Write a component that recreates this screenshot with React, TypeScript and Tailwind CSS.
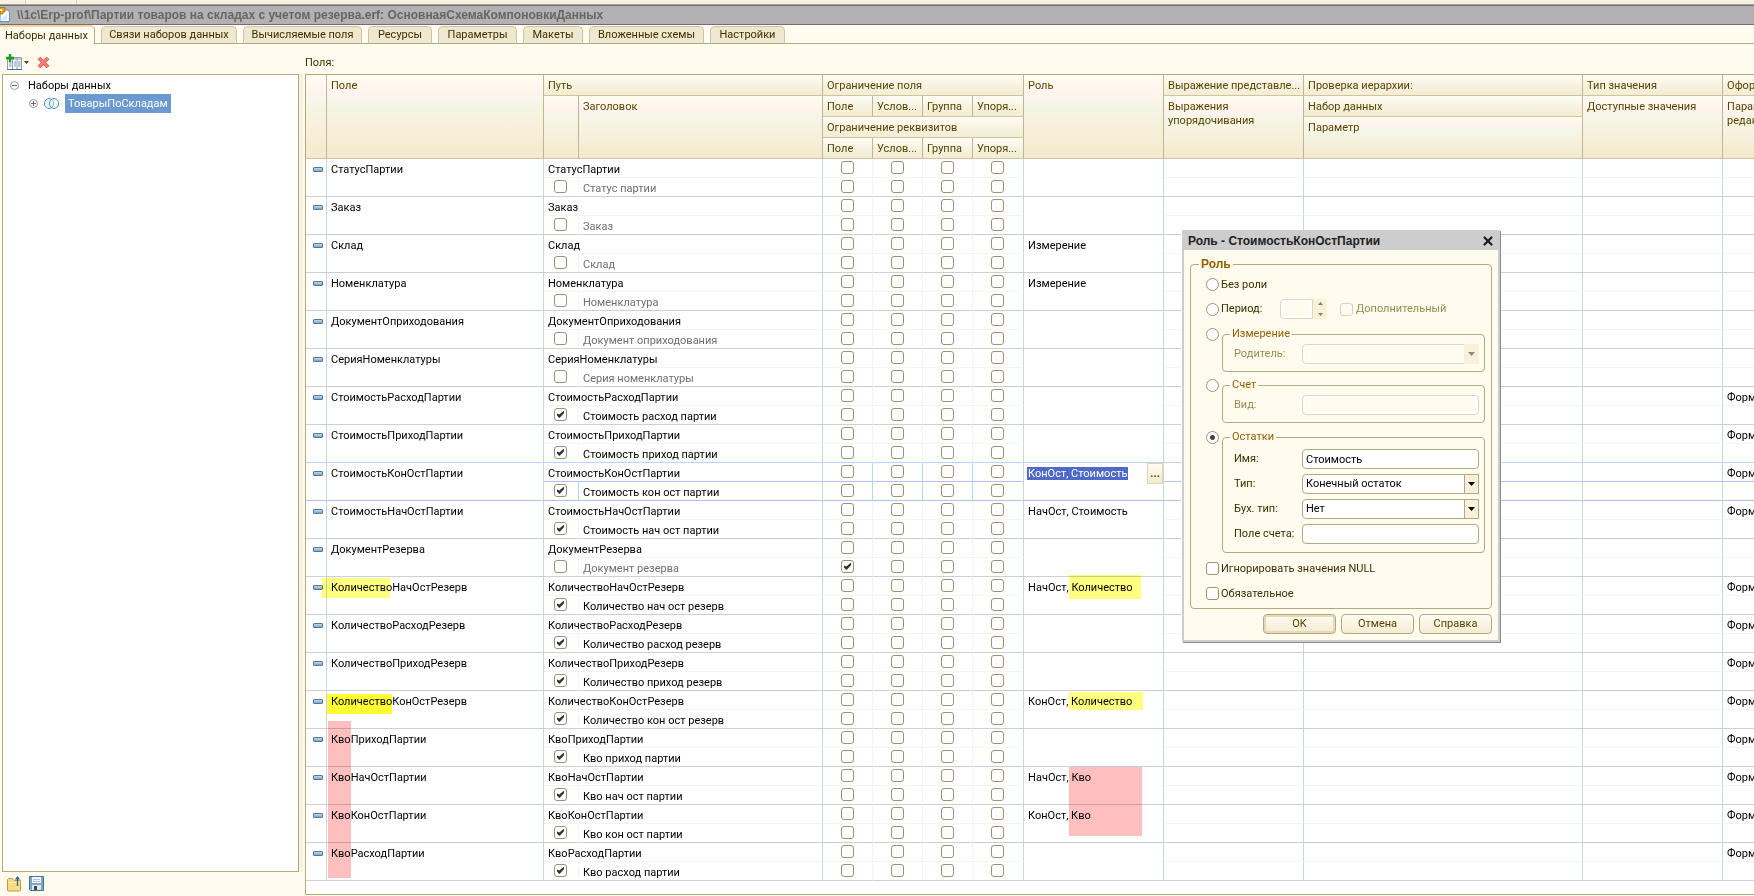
import { useState } from 'react';
import { X } from 'lucide-react';

const tabs = [
    { title: 'Связи наборов данных', width: 'w-[136px]' },
    { title: 'Вычисляемые поля', width: 'w-[119px]' },
    { title: 'Ресурсы', width: 'w-16' },
    { title: 'Параметры', width: 'w-[79px]' },
    { title: 'Макеты', width: 'w-[60px]' },
    { title: 'Вложенные схемы', width: 'w-[115px]' },
    { title: 'Настройки', width: 'w-[75px]' },
];

const fields = [
    { name: 'СтатусПартии', title: 'Статус партии' },
    { name: 'Заказ', title: 'Заказ' },
    { name: 'Склад', title: 'Склад', role: 'Измерение' },
    { name: 'Номенклатура', title: 'Номенклатура', role: 'Измерение' },
    { name: 'ДокументОприходования', title: 'Документ оприходования' },
    { name: 'СерияНоменклатуры', title: 'Серия номенклатуры' },
    { name: 'СтоимостьРасходПартии', title: 'Стоимость расход партии', custom: true, format: true },
    { name: 'СтоимостьПриходПартии', title: 'Стоимость приход партии', custom: true, format: true },
    { name: 'СтоимостьКонОстПартии', title: 'Стоимость кон ост партии', custom: true, format: true, role: 'КонОст, Стоимость', active: true },
    { name: 'СтоимостьНачОстПартии', title: 'Стоимость нач ост партии', custom: true, format: true, role: 'НачОст, Стоимость' },
    { name: 'ДокументРезерва', title: 'Документ резерва', restricted: true },
    { name: 'КоличествоНачОстРезерв', title: 'Количество нач ост резерв', custom: true, format: true, role: 'НачОст, Количество' },
    { name: 'КоличествоРасходРезерв', title: 'Количество расход резерв', custom: true, format: true },
    { name: 'КоличествоПриходРезерв', title: 'Количество приход резерв', custom: true, format: true },
    { name: 'КоличествоКонОстРезерв', title: 'Количество кон ост резерв', custom: true, format: true, role: 'КонОст, Количество' },
    { name: 'КвоПриходПартии', title: 'Кво приход партии', custom: true, format: true },
    { name: 'КвоНачОстПартии', title: 'Кво нач ост партии', custom: true, format: true, role: 'НачОст, Кво' },
    { name: 'КвоКонОстПартии', title: 'Кво кон ост партии', custom: true, format: true, role: 'КонОст, Кво' },
    { name: 'КвоРасходПартии', title: 'Кво расход партии', custom: true, format: true },
];

export default function App() {
    const [dialogOpen, setDialogOpen] = useState(true);

    return (
        <div className="relative min-h-screen flex flex-col bg-[#fffbef] text-[#3f2f00] text-[11px] leading-[14px] font-[Roboto,'Liberation_Sans',sans-serif] overflow-hidden">
            {/* Window title */}
            <div className="h-1 bg-[#f7f1df] flex">
                <div className="w-[26px] border-r border-[#ddd5bb]" />
                <div className="w-[51px] border-r border-[#ddd5bb]" />
            </div>
            <header className="h-[21px] bg-[#b3b1b3] border-t border-[#a5a3a5] border-b border-b-[#706d75] shadow-[inset_0_1px_0_#706d75] flex items-center">
                <WindowIcon />
                <h1 className="ml-[7px] pt-px text-[12px] font-bold font-['Liberation_Sans',sans-serif] text-[#65675f] whitespace-nowrap">{'\\\\1c\\Erp-prof\\Партии товаров на складах с учетом резерва.erf: ОсновнаяСхемаКомпоновкиДанных'}</h1>
            </header>

            {/* Tabs */}
            <nav className="h-[19px] flex items-end gap-1.5 shadow-[inset_0_-1px_0_#b3a97d]">
                <button className="w-[95px] h-[19px] bg-[#fffbef] border-t-2 border-t-[#fbd39b] border-r border-r-[#b3a97d] rounded-tr-[5px] pl-[5px] text-left whitespace-nowrap">Наборы данных</button>
                {tabs.map(tab => (
                    <button key={tab.title} className={`${tab.width} h-[18px] bg-[#efe7d0] border border-[#cdc4a4] border-b-[#b3a97d] rounded-t-[5px] whitespace-nowrap`}>
                        {tab.title}
                    </button>
                ))}
            </nav>

            <main className="flex-1 flex pb-px">
                {/* Data sets */}
                <aside className="w-[299px] shrink-0 flex flex-col pl-0.5">
                    <div className="h-[30px] flex items-center pt-1.5 pl-1 gap-[7px]">
                        <button aria-label="Добавить"><AddTableIcon /></button>
                        <button aria-label="Удалить"><DeleteIcon /></button>
                    </div>
                    <div className="flex-1 bg-white border border-[#b3a97d] text-black">
                        <div className="flex items-center h-[19px] pl-[7px] gap-[9px] pt-0.5">
                            <Toggle />
                            <span>Наборы данных</span>
                        </div>
                        <div className="flex items-center h-[19px] pl-[26px] gap-1.5">
                            <Toggle plus />
                            <svg width="15" height="11" viewBox="0 0 15 11" fill="#eef7fd" stroke="#4a93c4">
                                <rect x="0.5" y="0.5" width="9" height="10" rx="4.5" />
                                <rect x="5.5" y="0.5" width="9" height="10" rx="4.5" fillOpacity="0.4" />
                            </svg>
                            <span className="bg-[#6a9acf] text-white h-[19px] px-[3px] py-[3px]">ТоварыПоСкладам</span>
                        </div>
                    </div>
                    <div className="h-[23px] flex items-center gap-[7px] pl-[5px]">
                        <button aria-label="Открыть"><FolderIcon /></button>
                        <button aria-label="Сохранить"><FloppyIcon /></button>
                    </div>
                </aside>
                <div className="w-1 mt-[30px] mb-[23px] mr-0.5 bg-[#f7f1df]" />

                {/* Fields */}
                <section className="flex-1 min-w-0 flex flex-col">
                    <div className="h-[30px] flex items-center pt-2">Поля:</div>
                    <div className="flex-1 relative bg-white border border-r-0 border-[#b3a97d] overflow-hidden">
                        <FieldsTable />
                        <Marks />
                    </div>
                </section>
            </main>

            {dialogOpen && <RoleDialog onClose={() => setDialogOpen(false)} />}
        </div>
    );
}

function Head({ children, tall, last, ...rest }: any) {
    const fill = tall
        ? 'bg-[linear-gradient(#fffcf0,#fff4ee_20%,#f5f6e9_34%,#f6f3e0_50%,#f6eed8_75%,#f5ebcf_88%,#f5ead0)]'
        : 'bg-[linear-gradient(#fffcf2,#fdf8ec_25%,#f5f3e2_50%,#f5ecd2)]';
    return (
        <th {...rest} className={`${fill} ${last ? '' : 'border-r'} border-b border-r-[#bdb594] border-b-[#cdc4a4] font-normal text-left align-top pl-1 pt-1 pr-0 pb-0 whitespace-nowrap overflow-hidden`}>
            {children}
        </th>
    );
}

function FieldsTable() {
    return (
        <table className="w-full table-fixed border-separate border-spacing-0">
            <colgroup>
                <col className="w-[21px]" />
                <col className="w-[217px]" />
                <col className="w-[35px]" />
                <col className="w-[244px]" />
                <col className="w-[50px]" />
                <col className="w-[50px]" />
                <col className="w-[50px]" />
                <col className="w-[51px]" />
                <col className="w-[140px]" />
                <col className="w-[140px]" />
                <col className="w-[279px]" />
                <col className="w-[140px]" />
                <col />
            </colgroup>
            <thead className="text-[#594300]">
                <tr className="h-[21px]">
                    <Head tall rowSpan={4} />
                    <Head tall rowSpan={4}>Поле</Head>
                    <Head colSpan={2}>Путь</Head>
                    <Head colSpan={4}>Ограничение поля</Head>
                    <Head tall rowSpan={4}>Роль</Head>
                    <Head>Выражение представле...</Head>
                    <Head>Проверка иерархии:</Head>
                    <Head>Тип значения</Head>
                    <Head last>Оформление</Head>
                </tr>
                <tr className="h-[21px]">
                    <Head tall rowSpan={3} />
                    <Head tall rowSpan={3}>Заголовок</Head>
                    <Head>Поле</Head>
                    <Head>Услов...</Head>
                    <Head>Группа</Head>
                    <Head>Упоря...</Head>
                    <Head tall rowSpan={3}>Выражения<br />упорядочивания</Head>
                    <Head>Набор данных</Head>
                    <Head tall rowSpan={3}>Доступные значения</Head>
                    <Head last tall rowSpan={3}>Параметры<br />редактирования</Head>
                </tr>
                <tr className="h-[21px]">
                    <Head colSpan={4}>Ограничение реквизитов</Head>
                    <Head tall rowSpan={2}>Параметр</Head>
                </tr>
                <tr className="h-[21px]">
                    <Head>Поле</Head>
                    <Head>Услов...</Head>
                    <Head>Группа</Head>
                    <Head>Упоря...</Head>
                </tr>
            </thead>
            <tbody className="text-black">
                {fields.map((field, i) => (
                    <FieldRows key={field.name} field={field} beforeActive={!!fields[i + 1]?.active} />
                ))}
            </tbody>
        </table>
    );
}

function FieldRows({ field, beforeActive }: any) {
    const bottom = field.active ? 'border-b-[#adc4e8]' : beforeActive ? 'border-b-[#b8d6f6]' : 'border-b-[#cad1d5]';
    const middle = field.active ? 'border-b-[#adc4e8]' : 'border-b-[#f4f4f5]';
    const inner = field.active ? 'border-r-[#b8d6f6]' : 'border-r-[#f8f2f5]';
    const outer = 'border-r-[#ccd4dc]';
    const cell = 'border-r last:border-r-0 border-b p-0 align-top';
    const text = 'pl-1 pt-1 whitespace-nowrap overflow-hidden';
    const checks = [0, 1, 2, 3];

    return (
        <>
            <tr className="h-[19px]">
                <td rowSpan={2} className={`${cell} ${outer} ${bottom}`}>
                    <div className="ml-[7px] mt-2 w-2.5 h-[5px] rounded-[1px] border border-[#54789a] bg-[linear-gradient(#c5dbee,#7fa4c6)]" />
                </td>
                <td rowSpan={2} className={`${cell} ${text} ${outer} ${bottom}`}>{field.name}</td>
                <td colSpan={2} className={`${cell} ${text} ${outer} ${middle}`}>{field.name}</td>
                {checks.map(n => (
                    <td key={n} className={`${cell} ${n === 3 ? outer : inner} ${middle}`}>
                        <div className="flex pl-[18px] pt-0.5"><Check label="Ограничение поля" /></div>
                    </td>
                ))}
                <td rowSpan={2} className={`${cell} ${outer} ${bottom}`}>
                    {field.active ? (
                        <div className="flex justify-between">
                            <span className="ml-[3px] mt-1 h-[13px] px-px bg-[#4f69c6] text-white whitespace-nowrap">{field.role}</span>
                            <button aria-label="Выбрать" className="w-4 h-[21px] border border-[#ddd3b5] bg-[linear-gradient(#fffcf2,#f3e9cd)] font-bold text-[#594300]">...</button>
                        </div>
                    ) : (
                        <div className={text}>{field.role}</div>
                    )}
                </td>
                <td className={`${cell} ${outer} ${middle}`} />
                <td className={`${cell} ${outer} ${middle}`} />
                <td className={`${cell} ${outer} ${middle}`} />
                <td className={`${cell} ${text} ${outer} ${middle}`}>{field.format && 'Формат'}</td>
            </tr>
            <tr className="h-[19px]">
                <td className={`${cell} ${inner} ${bottom}`}>
                    <div className="flex pl-2.5 pt-0.5"><Check label={field.title} checked={field.custom} /></div>
                </td>
                <td className={`${cell} ${text} ${outer} ${bottom} ${field.custom ? '' : 'text-[#6f6f6f]'}`}>{field.title}</td>
                {checks.map(n => (
                    <td key={n} className={`${cell} ${n === 3 ? outer : inner} ${bottom}`}>
                        <div className="flex pl-[18px] pt-0.5"><Check label="Ограничение реквизитов" checked={field.restricted && n === 0} /></div>
                    </td>
                ))}
                <td className={`${cell} ${outer} ${bottom}`} />
                <td className={`${cell} ${outer} ${bottom}`} />
                <td className={`${cell} ${outer} ${bottom}`} />
                <td className={`${cell} ${outer} ${bottom}`} />
            </tr>
        </>
    );
}

// Marker strokes drawn over the table
function Marks() {
    return (
        <div className="absolute inset-0 pointer-events-none mix-blend-multiply">
            <div className="absolute left-4 top-[503px] w-[68px] h-5 bg-[#ffff80]" />
            <div className="absolute left-[21px] top-[619px] w-[65px] h-5 bg-[#ffff33]" />
            <div className="absolute left-[22px] top-[646px] w-[23px] h-[157px] bg-[#ffbfbf]" />
            <div className="absolute left-[763px] top-[500px] w-[72px] h-6 bg-[#ffff80]" />
            <div className="absolute left-[763px] top-[617px] w-[74px] h-[18px] bg-[#ffff80]" />
            <div className="absolute left-[763px] top-[692px] w-[73px] h-[69px] bg-[#ffbfbf]" />
        </div>
    );
}

function Check({ id, label, checked = false, disabled = false }: any) {
    return (
        <span className="inline-grid size-[13px] shrink-0">
            <input
                id={id}
                type="checkbox"
                aria-label={label}
                defaultChecked={checked}
                disabled={disabled}
                className="peer [grid-area:1/1] appearance-none size-[13px] rounded-[3px] border border-[#9c9271] bg-white disabled:border-[#d9d2ba] disabled:bg-[#fffbef]"
            />
            <svg viewBox="0 0 13 13" className="[grid-area:1/1] size-[13px] pointer-events-none hidden peer-checked:block" fill="#333">
                <path d="M3 5.5L5.3 6.6L9.5 3H10V5.2L5.8 9.8H5L3 7.5Z" />
            </svg>
        </span>
    );
}

function Radio({ id, label, checked = false }: any) {
    return (
        <input
            id={id}
            type="radio"
            name="role"
            aria-label={label}
            defaultChecked={checked}
            className="appearance-none size-[13px] shrink-0 rounded-full border border-[#9c9271] bg-white checked:bg-[radial-gradient(circle,#444_2px,#fff_3px)]"
        />
    );
}

function Group({ title, children, className }: any) {
    return (
        <fieldset className={`flex-1 min-w-0 border border-[#b3a97d] rounded-[4px] pl-[11px] pr-[5px] ${className}`}>
            <legend className="-ml-[4px] px-0.5 text-[#966000]">{title}</legend>
            {children}
        </fieldset>
    );
}

function Arrow({ className }: any) {
    return (
        <svg viewBox="0 0 7 4" width="7" height="4" className={className} fill="currentColor">
            <path d="M0 0H7L3.5 4Z" />
        </svg>
    );
}

const box = 'h-5 w-full rounded-[4px] border border-[#b3a97d] bg-white text-black px-[3px] outline-none disabled:border-[#dcd6c2] disabled:bg-[#fffbef] disabled:shadow-[inset_0_0_0_2px_#fff]';

function SelectBox({ id, value, disabled = false }: any) {
    return (
        <div className="relative flex-1 text-black">
            <select id={id} disabled={disabled} defaultValue={value} className={`${box} appearance-none rounded-r-none block opacity-100`}>
                <option>{value}</option>
            </select>
            <div className={`absolute right-0 top-0 w-[15px] h-5 flex items-center justify-center pointer-events-none border bg-[#f7f0dc] ${disabled ? 'border-[#fdf3cf] text-[#8f8a80]' : 'border-[#b3a97d]'}`}>
                <Arrow />
            </div>
        </div>
    );
}

function RoleDialog({ onClose }: any) {
    const row = 'flex items-center';
    const label = 'w-[68px] shrink-0';

    return (
        <div role="dialog" aria-labelledby="role-title" className="absolute left-[1182px] top-[230px] w-[318px] border-2 border-t-0 border-[#cdcdcd] bg-[#fffbef] shadow-[1px_1px_0_#8b8b8b,-1px_0_0_#fff]">
            <div className="h-5 bg-[#cdcdcd] flex items-center justify-between pl-1 pr-[3px] pt-0.5 text-[#222]">
                <h2 id="role-title" className="text-[12px] font-bold font-['Liberation_Sans',sans-serif]">Роль - СтоимостьКонОстПартии</h2>
                <button aria-label="Закрыть" onClick={onClose}><X size={14} strokeWidth={4} /></button>
            </div>

            <div className="px-1.5 pt-[7px] pb-1.5">
                <fieldset className="border border-[#b3a97d] rounded-[4px] pl-[15px] pr-1.5 pb-2">
                    <legend className="-ml-[7px] px-0.5 text-[12px] font-bold font-['Liberation_Sans',sans-serif] text-[#966000]">Роль</legend>

                    <div className="flex items-center gap-0.5 mt-[7px] h-[13px]">
                        <Radio id="none" />
                        <label htmlFor="none">Без роли</label>
                    </div>

                    <div className="flex items-center mt-2 h-5">
                        <Radio id="period" />
                        <label htmlFor="period" className="ml-0.5 w-[59px]">Период:</label>
                        <input aria-label="Номер периода" disabled className={`${box} w-[33px]! rounded-r-none`} />
                        <div className="w-3.5 h-5 bg-[#f7f0dc] border border-[#fdf3cf] flex flex-col items-center justify-between py-0.5 text-[#8f7f45]">
                            <Arrow className="w-[5px] h-[3px] rotate-180" />
                            <Arrow className="w-[5px] h-[3px]" />
                        </div>
                        <div className="ml-[13px] flex items-center gap-[3px] text-[#9c8c50]">
                            <Check id="extra" disabled />
                            <label htmlFor="extra">Дополнительный</label>
                        </div>
                    </div>

                    <div className="flex items-start gap-[3px] mt-2">
                        <span className="flex pt-px"><Radio label="Измерение" /></span>
                        <Group title="Измерение" className="pt-[3px] pb-[7px]">
                            <div className={`${row} text-[#9c8c50]`}>
                                <label htmlFor="parent" className={label}>Родитель:</label>
                                <SelectBox id="parent" value="" disabled />
                            </div>
                        </Group>
                    </div>

                    <div className="flex items-start gap-[3px] mt-1.5">
                        <span className="flex pt-px"><Radio label="Счет" /></span>
                        <Group title="Счет" className="pt-[3px] pb-[7px]">
                            <div className={`${row} text-[#9c8c50]`}>
                                <label htmlFor="kind" className={label}>Вид:</label>
                                <input id="kind" disabled className={box} />
                            </div>
                        </Group>
                    </div>

                    <div className="flex items-start gap-[3px] mt-[7px]">
                        <span className="flex pt-px"><Radio label="Остатки" checked /></span>
                        <Group title="Остатки" className="pt-[5px] pb-2">
                            <div className="flex flex-col gap-[5px]">
                                <div className={row}>
                                    <label htmlFor="name" className={label}>Имя:</label>
                                    <input id="name" defaultValue="Стоимость" className={box} />
                                </div>
                                <div className={row}>
                                    <label htmlFor="type" className={label}>Тип:</label>
                                    <SelectBox id="type" value="Конечный остаток" />
                                </div>
                                <div className={row}>
                                    <label htmlFor="acc-type" className={label}>Бух. тип:</label>
                                    <SelectBox id="acc-type" value="Нет" />
                                </div>
                                <div className={row}>
                                    <label htmlFor="account" className={label}>Поле счета:</label>
                                    <input id="account" className={box} />
                                </div>
                            </div>
                        </Group>
                    </div>

                    <div className="flex items-center gap-0.5 mt-[9px] h-[13px]">
                        <Check id="ignore-null" />
                        <label htmlFor="ignore-null">Игнорировать значения NULL</label>
                    </div>
                    <div className="flex items-center gap-0.5 mt-3 h-[13px]">
                        <Check id="required" />
                        <label htmlFor="required">Обязательное</label>
                    </div>
                </fieldset>

                <div className="flex justify-end gap-[5px] mt-[5px] text-[#594300]">
                    <button className="w-[73px] h-5 rounded-[4px] border border-[#b3a97d] bg-[linear-gradient(#fffcf2,#f3ebd3)] shadow-[inset_0_0_0_2px_#e6dab5]">OK</button>
                    <button className="w-[73px] h-5 rounded-[4px] border border-[#b3a97d] bg-[linear-gradient(#fffcf2,#f3ebd3)]" onClick={onClose}>Отмена</button>
                    <button className="w-[73px] h-5 rounded-[4px] border border-[#b3a97d] bg-[linear-gradient(#fffcf2,#f3ebd3)]">Справка</button>
                </div>
            </div>
        </div>
    );
}

function Toggle({ plus = false }: any) {
    return (
        <svg width="9" height="9" viewBox="0 0 9 9" fill="#fff" stroke="#9a9a9a" className="shrink-0">
            <circle cx="4.5" cy="4.5" r="4" />
            <path d={plus ? 'M2 4.5H7M4.5 2V7' : 'M2 4.5H7'} stroke="#666" />
        </svg>
    );
}

function WindowIcon() {
    return (
        <svg width="10" height="16" viewBox="0 0 10 16" className="shrink-0">
            <path d="M0 3H8L9.5 5V14.5H0Z" fill="#fff" stroke="#5b8fc0" />
            <path d="M0 13L7 7V13Z" fill="#d8eaf8" />
            <path d="M0 0.5H5V5H3V7H0Z" fill="#f0a91c" stroke="#8a5a10" strokeWidth="0.6" />
            <rect x="0" y="2" width="2" height="2" fill="#fff2b0" />
        </svg>
    );
}

function AddTableIcon() {
    return (
        <svg width="24" height="17" viewBox="0 0 24 17">
            <rect x="1.5" y="3.5" width="14" height="12" fill="#fff" stroke="#8ba3b5" />
            <rect x="2" y="4" width="13" height="2" fill="#b9cbd9" />
            <path d="M6.5 4V15M11 4V15" stroke="#8ba3b5" />
            <path d="M3 8H5.5M3 10H5.5M3 12H5.5M8 8H10M8 10H10M8 12H10M12 8H14.5M12 10H14.5M12 12H14.5" stroke="#6f93ae" />
            <path d="M1 15.5H16" stroke="#4a7291" />
            <path d="M4 0V8M0 4H8" stroke="#1f9a1f" strokeWidth="2.4" />
            <path d="M18 7H23L20.5 10Z" fill="#594300" />
        </svg>
    );
}

function DeleteIcon() {
    return (
        <svg width="13" height="13" viewBox="0 0 13 13">
            <path d="M2 2L11 11M11 2L2 11" stroke="#d9554d" strokeWidth="3.8" />
            <path d="M2 2L11 11M11 2L2 11" stroke="#f58478" strokeWidth="2" />
        </svg>
    );
}

function FolderIcon() {
    return (
        <svg width="15" height="16" viewBox="0 0 15 16">
            <path d="M0.5 14.5V3.5L1.5 2.5H5.5L7 4.5H13.5V14L12.5 15H1Z" fill="#f7dd86" stroke="#c59a3c" />
            <path d="M1.5 6.5H12.5" stroke="#fff3c0" />
            <path d="M10.5 10V1.5" stroke="#3f6585" strokeWidth="1.4" />
            <path d="M7.8 3.5L10.5 0L13.2 3.5Z" fill="#3f6585" />
        </svg>
    );
}

function FloppyIcon() {
    return (
        <svg width="15" height="15" viewBox="0 0 15 15">
            <path d="M0.5 0.5H14.5V14.5H1.5L0.5 13.5Z" fill="#7fa6c6" stroke="#4a7291" />
            <rect x="3" y="1" width="9" height="6" fill="#f2f8fd" />
            <path d="M4 3.5H11M4 5.5H11" stroke="#a9c4da" />
            <rect x="3" y="9" width="9" height="5" fill="#dfe5ea" />
            <rect x="5" y="10" width="3" height="4" fill="#3c4a56" />
        </svg>
    );
}
